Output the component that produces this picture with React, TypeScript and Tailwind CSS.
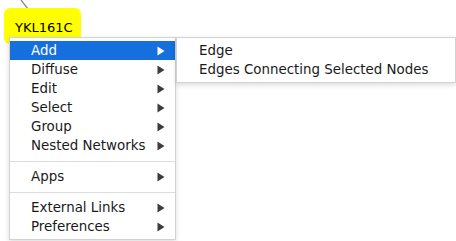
import { FC } from 'react';

type Item = { label: string; sub?: boolean; active?: boolean } | 'sep';

const mainItems: Item[] = [
  { label: 'Add', sub: true, active: true },
  { label: 'Diffuse', sub: true },
  { label: 'Edit', sub: true },
  { label: 'Select', sub: true },
  { label: 'Group', sub: true },
  { label: 'Nested Networks', sub: true },
  'sep',
  { label: 'Apps', sub: true },
  'sep',
  { label: 'External Links', sub: true },
  { label: 'Preferences', sub: true },
];

const subItems: Item[] = [
  { label: 'Edge' },
  { label: 'Edges Connecting Selected Nodes' },
];

const Arrow: FC<{ active?: boolean }> = ({ active }) => (
  <svg width="8" height="10" viewBox="0 0 8 10" className="shrink-0">
    <path d="M0.5 0.5 L7.5 5 L0.5 9.5 Z" fill={active ? '#ffffff' : '#3c3c3c'} />
  </svg>
);

const Menu: FC<{ items: Item[]; className: string; pad: string }> = ({
  items,
  className,
  pad,
}) => (
  <div
    className={`absolute flex flex-col py-[3px] bg-white border border-[#d2d2d2] shadow-[0_2px_5px_rgba(0,0,0,0.14)] ${className}`}
  >
    {items.map((it, key) =>
      it === 'sep' ? (
        <div key={key} className="h-[12px] flex items-center">
          <div className="h-px w-full bg-[#dcdcdc]" />
        </div>
      ) : (
        <div
          key={key}
          className={`h-[19px] flex items-center justify-between pr-[10px] ${pad} ${
            it.active ? 'bg-[#1570dd] text-white' : 'text-[#1a1a1a]'
          }`}
        >
          <span className="pt-px">{it.label}</span>
          {it.sub && <Arrow active={it.active} />}
        </div>
      ),
    )}
  </div>
);

export default function App() {
  return (
    <div
      className="relative w-[456px] h-[241px] bg-white overflow-hidden text-[13.4px] leading-none"
      style={{ fontFamily: '"DejaVu Sans", "Noto Sans", sans-serif' }}
    >
      <svg className="absolute left-0 top-0" width="40" height="12">
        <line x1="21" y1="0" x2="28" y2="9" stroke="#8a8a8a" strokeWidth="1.3" />
      </svg>
      <div className="absolute left-[4px] top-[8px] w-[77px] h-[36px] rounded-[6px] bg-[#ffff00] text-black text-[13px]">
        <div className="pt-[13px] pl-[11px]">YKL161C</div>
      </div>
      <Menu items={mainItems} className="left-[9px] top-[37px] w-[167px]" pad="pl-[21px]" />
      <Menu items={subItems} className="left-[176px] top-[37px] w-[280px]" pad="pl-[22px]" />
    </div>
  );
}
